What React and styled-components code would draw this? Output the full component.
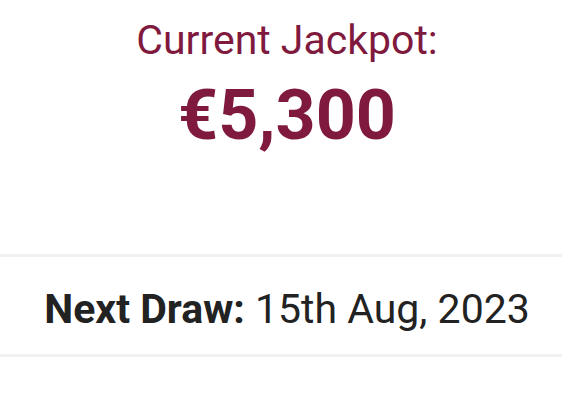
import React from 'react';
import styled, { createGlobalStyle } from 'styled-components';

const GlobalStyle = createGlobalStyle`
    body {
        margin: 0;
        background: #fff;
        font-family: Roboto, 'Liberation Sans', sans-serif;
    }
`;

const Page = styled.div`
    width: 562px;
    height: 400px;
    background: #fff;
    overflow: hidden;
`;

const Hero = styled.section`
    display: flex;
    flex-direction: column;
    align-items: center;
    box-sizing: border-box;
    height: 257px;
    padding: 16px 0 0 12px;
    border-bottom: 3px solid #f1f1f1;
`;

const Label = styled.div`
    font-size: 41px;
    line-height: 48px;
    color: #7f1a3e;
`;

const Amount = styled.div`
    margin-top: 10px;
    font-size: 70px;
    font-weight: 700;
    line-height: 82px;
    color: #7f1a3e;
`;

const DrawRow = styled.section`
    display: flex;
    align-items: center;
    justify-content: center;
    box-sizing: border-box;
    height: 100px;
    padding: 7px 0 0 12px;
    border-bottom: 3px solid #f1f1f1;
    font-size: 41px;
    line-height: 48px;
    color: #222;
    white-space: pre;
`;

const Strong = styled.strong`
    font-weight: 700;
`;

const App = () => {
    return (
        <Page>
            <GlobalStyle />
            <Hero>
                <Label>Current Jackpot:</Label>
                <Amount>€5,300</Amount>
            </Hero>
            <DrawRow>
                <Strong>Next Draw:</Strong>
                <span> 15th Aug, 2023</span>
            </DrawRow>
        </Page>
    );
};

export default App;
